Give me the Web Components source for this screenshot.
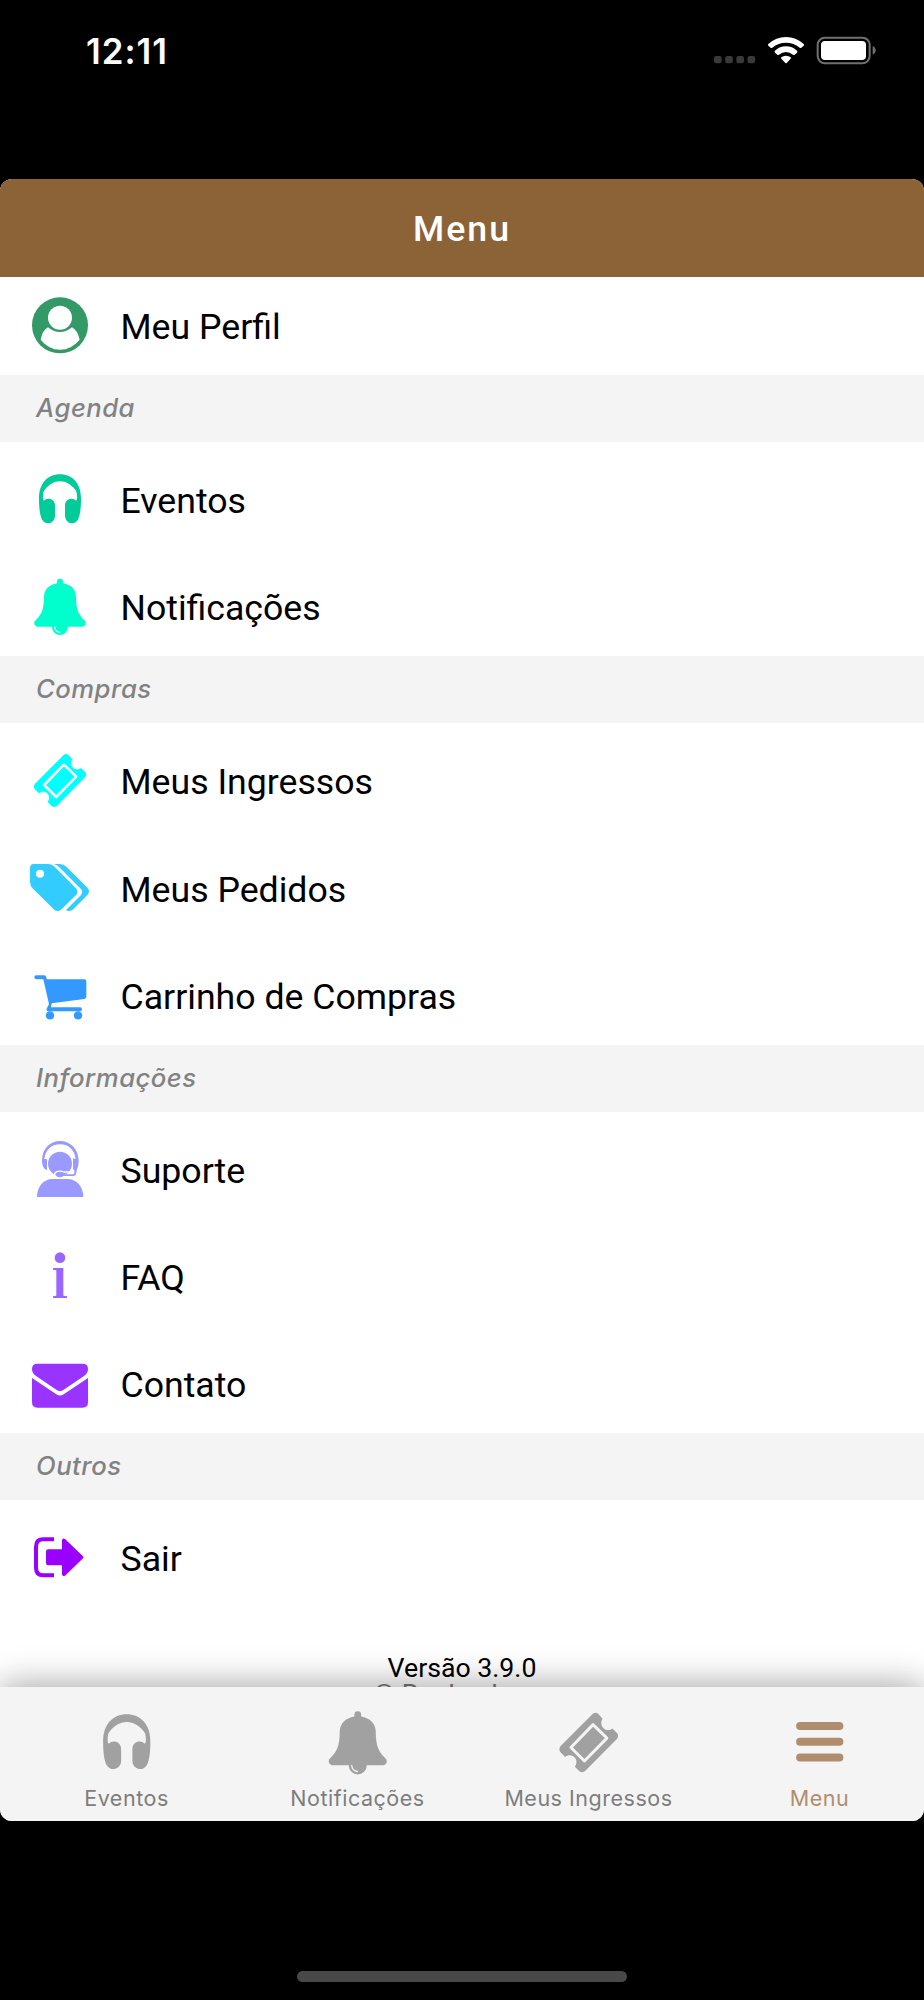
<!DOCTYPE html>
<html lang="pt-BR">
<head>
<meta charset="utf-8">
<title>Menu</title>
<style>
html,body{margin:0;padding:0;background:#000}
body{width:924px;height:2000px;overflow:hidden;font-family:Roboto,sans-serif}
</style>
</head>
<body>
<phone-screen></phone-screen>
<script>
const ICONS = {
  perfil: ['90 71 180 180', '<circle cx="180" cy="165" r="84"/><circle cx="180" cy="142" r="36" fill="#fff"/><path fill="#fff" d="M144 171Q127 180 122 208Q146 238 180 238Q214 238 239 208Q233 180 216 171Q200 185 180 185Q160 185 144 171Z"/>'],
  fone: ['90 593 180 180', '<path d="M180 612C216 612 243 638 243 684C243 716 240 736 233 749C224 762 209 761 200 751Q195 745 195 737V706C195 692 204 685 215 685Q223 685 228 691Q232 688 231 679C231 668 229 660 224 656C212 643 199 633 180 633C161 633 148 643 136 656C131 660 129 668 129 679Q128 688 132 691Q137 685 145 685C156 685 165 692 165 706V737Q165 745 160 751C151 761 136 762 127 749C120 736 117 716 117 684C117 638 144 612 180 612Z"/>'],
  sino: ['90 915 180 180', '<path d="M171 940V935A9 9 0 0 1 189 935V940C213 944 228 959 228 981C228 1019 236 1036 256 1054Q261 1065 249 1070H204V1071A24 24 0 0 1 156 1071V1070H111Q99 1065 104 1054C124 1036 132 1019 132 981C132 959 147 944 171 940Z"/><path d="M164 1071Q165 1085 179 1087" fill="none" stroke="var(--icon-bg,#fff)" stroke-width="3.6" stroke-linecap="round"/>'],
  ingresso: ['90 117 180 180', '<path d="M191 135Q198 129 205 135L217 148C211 157 213 168 220 174C227 180 237 179 243 174L256 187Q261 195 255 202L171 287Q163 294 155 288L143 276C149 267 149 257 141 250C133 243 123 245 117 250L104 237Q99 229 105 221Z"/><path d="M191.500 164L228.500 200L168.500 261L132.500 225Z" fill="none" stroke="var(--icon-bg,#fff)" stroke-width="7.800" stroke-linejoin="round"/>'],
  pedidos: ['90 438 180 180', '<path fill-rule="evenodd" d="M102 462H144Q154 462 162 469L228 535Q236 545 229 554L183 599Q173 607 163 599L99 536Q90 527 90 515V474Q90 462 102 462ZM120 479A12 12 0 1 0 120 503A12 12 0 1 0 120 479Z"/><path d="M161 462H179Q190 462 199 470L263 534Q271 544 263 554L218 599Q208 606 198 600L241 557Q252 546 242 536L178 472Q171 465 161 462Z"/>'],
  carrinho: ['90 761 180 180', '<path d="M109 795H132Q138 795 139 802L140 807H253Q259 807 259 813V859Q259 865 253 866L155 879L153 891H240A6 6 0 0 1 240 903H144Q137 900 141 893L147 881L130 807H109A6 6 0 0 1 109 795Z"/><circle cx="150" cy="915" r="12.500"/><circle cx="234" cy="915" r="12.500"/>'],
  suporte: ['90 144 180 180', '<path d="M111 321C111 291 129 267 158 267H202C231 267 250 291 250 321Z"/><circle cx="180" cy="221" r="36"/><path d="M164 259Q161 251 170 245Q180 241 192 246H216" fill="none" stroke="#fff" stroke-width="4"/><path d="M126 213C126 177 149 153 180 153C211 153 236 177 236 213Q236 228 231 237L228 252Q227 258 220 258H190Q187 262 180 262Q168 261 168 255Q169 249 180 249Q187 249 190 253H218Q223 253 223 248V240L219 238V205Q224 207 227 207C224 181 207 163 180 163C153 163 136 181 133 207Q137 206 141 208V241Q126 235 126 213Z"/>'],
  info: ['90 465 180 180', '<circle cx="180" cy="503" r="16"/><path d="M159 534H190V617L201 619V624H159V619L169 617V541L159 539Z"/>'],
  contato: ['90 785 180 180', '<path d="M112 820H248Q264 820 264 836Q264 848 253 856L190 899Q180 906 170 899L107 856Q96 848 96 836Q96 820 112 820Z"/><path d="M96 863L169 912Q180 919 191 912L264 863V936Q264 952 248 952H112Q96 952 96 936Z"/>'],
  sair: ['90 318 180 180', '<path d="M162 358H130Q108 358 108 380V443Q108 466 130 466H162" fill="none" stroke="currentColor" stroke-width="12"/><path d="M145 388H186V361Q187 352 195 357L249 409Q251 412 249 415L195 467Q187 471 186 463V436H145Q138 436 138 429V395Q138 388 145 388Z"/>'],
  menu: ['990 241 180 180', '<rect x="1017" y="281" width="126" height="21.300" rx="10.600"/><rect x="1017" y="323" width="126" height="21.300" rx="10.600"/><rect x="1017" y="365" width="126" height="21.300" rx="10.600"/>']
};

class Element extends HTMLElement {
  constructor() {
    super();
    this.attachShadow({ mode: 'open' });
  }
  connectedCallback() { this.shadowRoot.innerHTML = this.render(); }
}

customElements.define('menu-icon', class extends Element {
  render() {
    const [box, body] = ICONS[this.getAttribute('name')];
    return `<style>:host{display:block;flex:none}svg{display:block;width:100%;height:100%;fill:currentColor}</style>
      <svg viewBox="${box}" aria-hidden="true">${body}</svg>`;
  }
});

customElements.define('status-bar', class extends Element {
  render() {
    return `<style>
      :host{display:flex;justify-content:space-between;box-sizing:border-box;height:179px;padding:31px 47px 0 86px;color:#fff}
      time{font:600 34.800px/40px Inter,sans-serif;letter-spacing:1px}
      svg{display:block;width:163px;height:34px;margin-top:3px}
    </style>
    <time>12:11</time>
    <svg viewBox="42 42 489 102" aria-hidden="true">
      <g fill="#3a3a3a"><rect x="42" y="108" width="23" height="22" rx="7"/><rect x="75.500" y="108" width="23" height="22" rx="7"/><rect x="109" y="108" width="23" height="22" rx="7"/><rect x="142.500" y="108" width="23" height="22" rx="7"/></g>
      <g fill="#fff"><path d="M258 51Q288 51 311 72Q314 75 311 77L304 83Q302 85 299 83Q281 68 258 68Q235 68 217 83Q214 85 212 83L205 77Q202 75 205 72Q228 51 258 51Z"/><path d="M258 79Q277 79 291 92Q294 95 291 98L284 104Q282 106 279 104Q269 96 258 96Q247 96 237 104Q234 106 232 104L225 98Q222 95 225 92Q239 79 258 79Z"/><path d="M258 107Q266 107 272 112Q274 114 272 116L260 129Q258 131 256 129L244 116Q242 114 244 112Q250 107 258 107Z"/></g>
      <rect x="353" y="53" width="156" height="77" rx="22" fill="none" stroke="#707070" stroke-width="6"/>
      <rect x="363" y="63" width="135" height="57" rx="12" fill="#fff"/>
      <path d="M518 78Q527 82 527 91Q527 100 518 104Z" fill="#707070"/>
    </svg>`;
  }
});

customElements.define('app-header', class extends Element {
  render() {
    return `<style>
      :host{position:relative;z-index:1;display:flex;justify-content:center;align-items:center;flex:none;height:98px;background:#8c6237;color:#fff}
      h1{margin:2px 0 0;font:500 35.700px/42px Roboto,sans-serif;letter-spacing:2px}
    </style><h1><slot></slot></h1>`;
  }
});

customElements.define('menu-section', class extends Element {
  render() {
    return `<style>
      :host{display:block}
      h2{box-sizing:border-box;height:66.700px;margin:0;padding-left:36px;background:#f4f4f4;color:#828282;font:italic 500 25.700px/66.500px Inter,sans-serif;letter-spacing:.48px}
    </style><h2>${this.getAttribute('label')}</h2><slot></slot>`;
  }
});

customElements.define('menu-row', class extends Element {
  render() {
    return `<style>
      :host{display:flex;align-items:flex-start;box-sizing:border-box;height:107.250px;padding:26px 30px 0}
      menu-icon{width:60px;height:60px;color:${this.getAttribute('color')}}
      span{margin:12.300px 0 0 30.500px;color:#000;font:400 35.650px/42px Roboto,sans-serif;white-space:nowrap}
    </style><menu-icon name="${this.getAttribute('icon')}"></menu-icon><span><slot></slot></span>`;
  }
});

customElements.define('version-note', class extends Element {
  render() {
    return `<style>
      :host{display:block;padding-top:48px;text-align:center;font:400 26.700px/26px Roboto,sans-serif}
      p{margin:0;color:#000}
      p+p{color:#777;letter-spacing:.3px}
    </style><p>Versão 3.9.0</p><p>© Rockenhaus</p>`;
  }
});

customElements.define('tab-item', class extends Element {
  render() {
    return `<style>
      :host{display:flex;flex-direction:column;align-items:center;padding-top:20px;color:#7d7d7d}
      menu-icon{width:67.500px;height:67.500px;color:#a1a1a1;--icon-bg:#f4f4f4}
      span{margin-top:10px;font:400 21.500px/26px Inter,sans-serif;letter-spacing:.52px;white-space:nowrap}
      :host([active]),:host([active]) menu-icon{color:#ae8e6f}
    </style><menu-icon name="${this.getAttribute('icon')}"></menu-icon><span><slot></slot></span>`;
  }
});

customElements.define('tab-bar', class extends Element {
  render() {
    return `<style>
      :host{position:relative;z-index:1;flex:none;display:grid;grid-template-columns:repeat(4,231px);box-sizing:border-box;height:134px;padding-left:11px;background:#f4f4f4;box-shadow:0 0 34px rgba(0,0,0,.4)}
    </style><slot></slot>`;
  }
});

customElements.define('phone-screen', class extends Element {
  render() {
    return `<style>
      :host{display:flex;flex-direction:column;width:924px;height:2000px;background:#000}
      .app{display:flex;flex-direction:column;height:1642px;border-radius:12px;overflow:hidden;background:#fff}
      main{flex:1;min-height:0;overflow:hidden}
      .first{display:block;margin-top:-9.050px}
      .home{width:330px;height:11px;margin:150px auto 0;border-radius:6px;background:#484848}
    </style>
    <status-bar></status-bar>
    <div class="app">
      <app-header>Menu</app-header>
      <main>
        <div class="first"><menu-row icon="perfil" color="#339966">Meu Perfil</menu-row></div>
        <menu-section label="Agenda">
          <menu-row icon="fone" color="#00cc99">Eventos</menu-row>
          <menu-row icon="sino" color="#00ffcc">Notificações</menu-row>
        </menu-section>
        <menu-section label="Compras">
          <menu-row icon="ingresso" color="#00ffff">Meus Ingressos</menu-row>
          <menu-row icon="pedidos" color="#33ccff">Meus Pedidos</menu-row>
          <menu-row icon="carrinho" color="#3399ff">Carrinho de Compras</menu-row>
        </menu-section>
        <menu-section label="Informações">
          <menu-row icon="suporte" color="#9999ff">Suporte</menu-row>
          <menu-row icon="info" color="#9966ff">FAQ</menu-row>
          <menu-row icon="contato" color="#9933ff">Contato</menu-row>
        </menu-section>
        <menu-section label="Outros">
          <menu-row icon="sair" color="#9900ff">Sair</menu-row>
        </menu-section>
        <version-note></version-note>
      </main>
      <tab-bar>
        <tab-item icon="fone">Eventos</tab-item>
        <tab-item icon="sino">Notificações</tab-item>
        <tab-item icon="ingresso">Meus Ingressos</tab-item>
        <tab-item icon="menu" active>Menu</tab-item>
      </tab-bar>
    </div>
    <div class="home"></div>`;
  }
});
</script>
</body>
</html>
